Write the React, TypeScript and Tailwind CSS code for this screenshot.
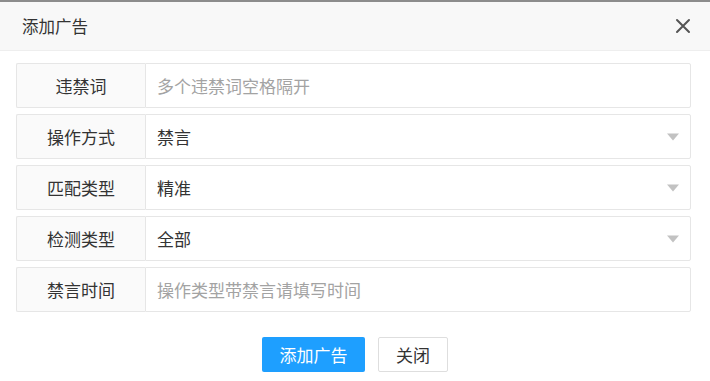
import React from 'react';

const font = { fontFamily: '"Noto Sans CJK SC", "Noto Sans", sans-serif' };

type Row = { label: string; value?: string; placeholder?: string; select?: boolean };

const rows: Row[] = [
  { label: '违禁词', placeholder: '多个违禁词空格隔开' },
  { label: '操作方式', value: '禁言', select: true },
  { label: '匹配类型', value: '精准', select: true },
  { label: '检测类型', value: '全部', select: true },
  { label: '禁言时间', placeholder: '操作类型带禁言请填写时间' },
];

function FormRow({ row }: { row: Row }) {
  return (
    <div className="flex h-[45px] mb-[6px]">
      <div className="w-[129px] shrink-0 flex items-center justify-center bg-[#fafafa] border border-r-0 border-[#e6e6e6] rounded-l-[2px] text-[17px] text-[#333]">
        {row.label}
      </div>
      <div className="flex-1 relative flex items-center border border-[#e6e6e6] rounded-r-[2px] pl-[11px] pr-[12px] bg-white">
        {row.select ? (
          <>
            <span className="text-[17px] text-[#333]">{row.value}</span>
            <span className="absolute right-[11px] top-1/2 -translate-y-1/2 w-0 h-0 border-l-[6px] border-r-[6px] border-t-[7px] border-l-transparent border-r-transparent border-t-[#c2c2c2]" />
          </>
        ) : (
          <input
            className="w-full outline-none text-[17px] text-[#333] placeholder:text-[#a3a3a3] bg-transparent"
            placeholder={row.placeholder}
            style={font}
          />
        )}
      </div>
    </div>
  );
}

export default function App() {
  return (
    <div className="w-[710px] h-[381px] bg-white border-t-2 border-[#8c8c8c] flex flex-col" style={font}>
      {/* Header */}
      <div className="h-[49px] shrink-0 flex items-center justify-between bg-[#f8f8f8] border-b border-[#eeeeee] pl-[22px] pr-[19px]">
        <span className="text-[16.5px] text-[#333]">添加广告</span>
        <svg width="16" height="16" viewBox="0 0 16 16" className="text-[#555]">
          <path d="M2 2 L14 14 M14 2 L2 14" stroke="currentColor" strokeWidth="2" strokeLinecap="round" />
        </svg>
      </div>

      {/* Form */}
      <div className="pt-[12px] pl-[16px] pr-[19px]">
        {rows.map((r) => (
          <FormRow key={r.label} row={r} />
        ))}
      </div>

      {/* Buttons */}
      <div className="flex justify-center gap-[13px] mt-[19px]">
        <button className="w-[103px] h-[35px] rounded-[2px] bg-[#1e9fff] text-white text-[17px]">添加广告</button>
        <button className="w-[70px] h-[35px] rounded-[2px] bg-white border border-[#dedede] text-[#333] text-[17px]">关闭</button>
      </div>
    </div>
  );
}
